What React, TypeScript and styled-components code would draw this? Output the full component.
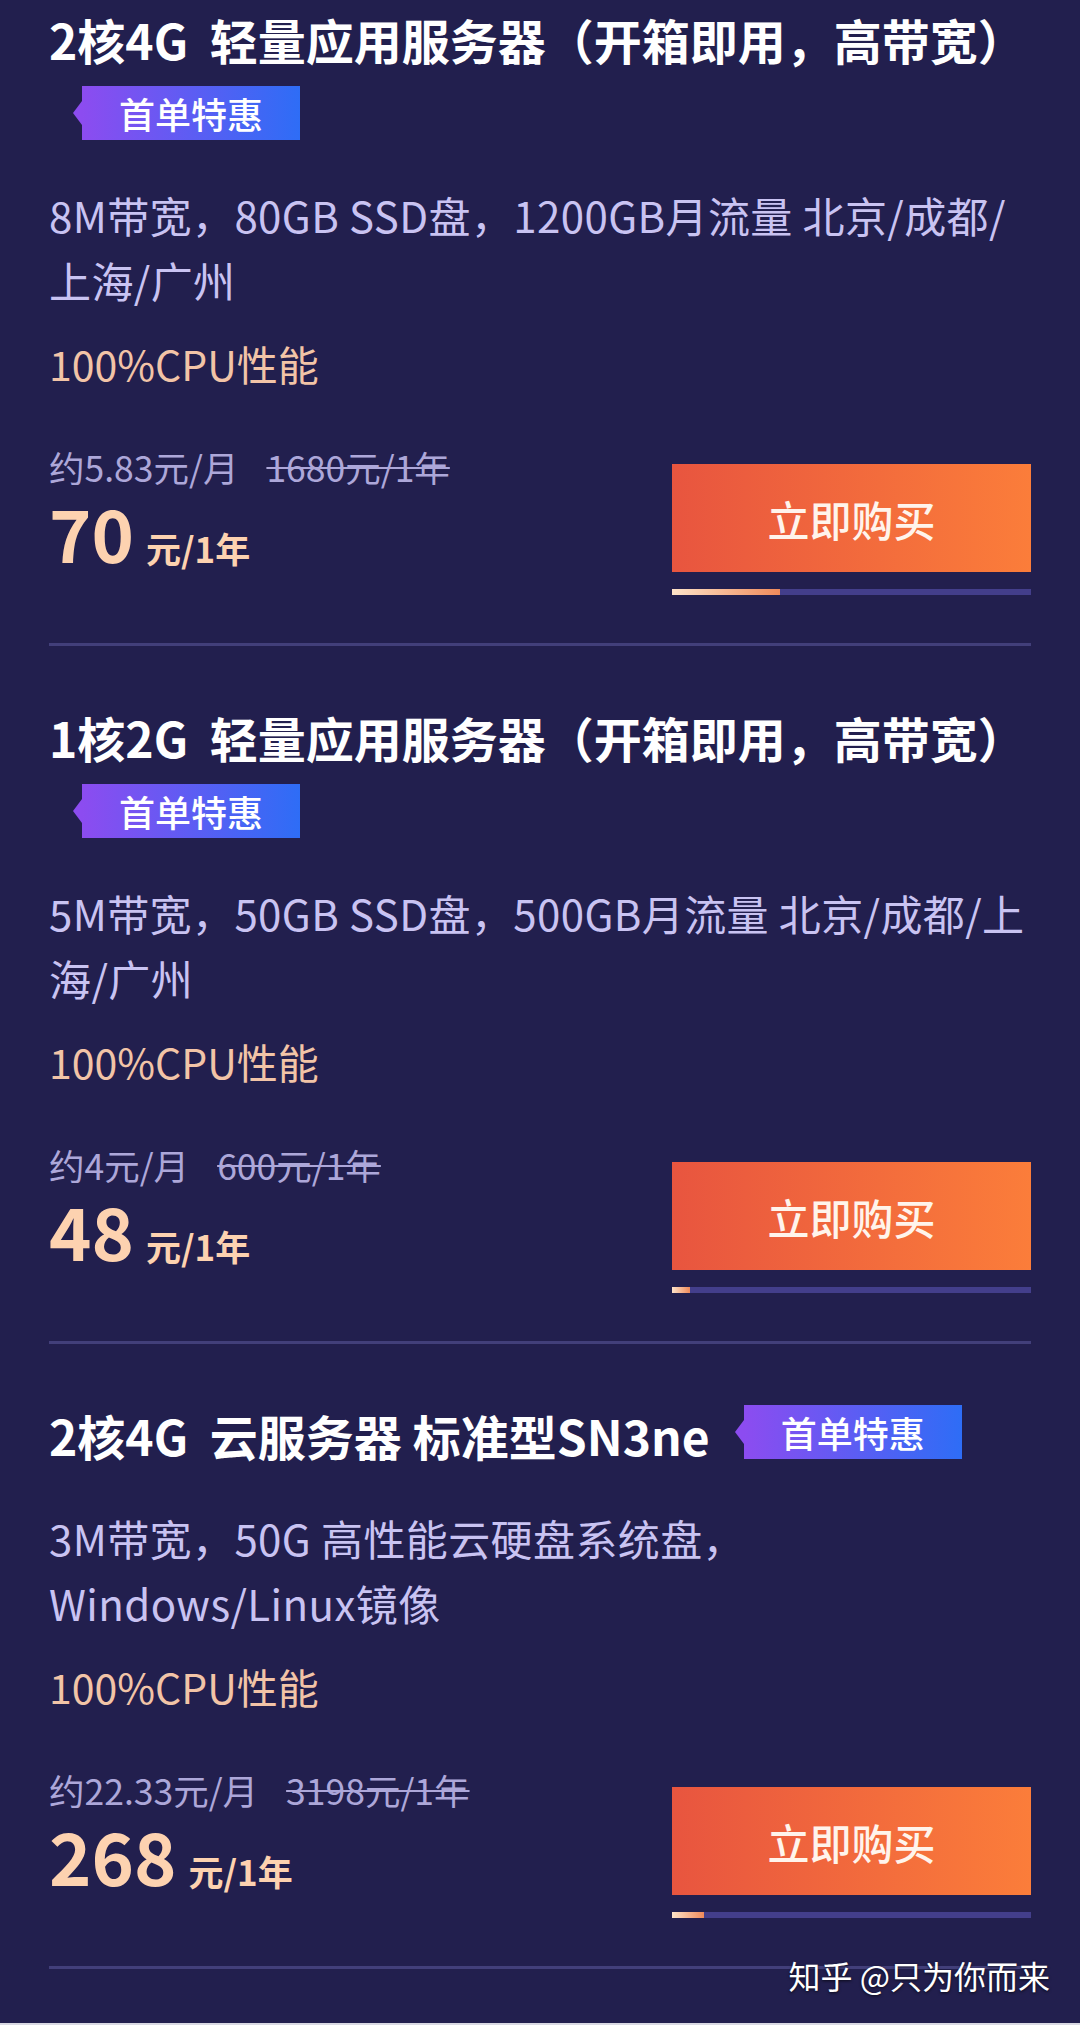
import styled, { createGlobalStyle } from 'styled-components';

interface IProduct {
  id: string;
  title: string;
  inlineTag: boolean;
  description: string;
  perMonth: string;
  original: string;
  price: string;
  progress: number;
}

const products: IProduct[] = [
  {
    id: 'lighthouse-2c4g',
    title: '2核4G\u00a0\u00a0轻量应用服务器（开箱即用，高带宽）',
    inlineTag: false,
    description: '8M带宽，80GB SSD盘，1200GB月流量 北京/成都/上海/广州',
    perMonth: '约5.83元/月',
    original: '1680元/1年',
    price: '70',
    progress: 30,
  },
  {
    id: 'lighthouse-1c2g',
    title: '1核2G\u00a0\u00a0轻量应用服务器（开箱即用，高带宽）',
    inlineTag: false,
    description: '5M带宽，50GB SSD盘，500GB月流量 北京/成都/上海/广州',
    perMonth: '约4元/月',
    original: '600元/1年',
    price: '48',
    progress: 5,
  },
  {
    id: 'cvm-2c4g',
    title: '2核4G\u00a0\u00a0云服务器 标准型SN3ne',
    inlineTag: true,
    description: '3M带宽，50G 高性能云硬盘系统盘，\nWindows/Linux镜像',
    perMonth: '约22.33元/月',
    original: '3198元/1年',
    price: '268',
    progress: 9,
  },
];

const GlobalStyle = createGlobalStyle`
  html, body {
    margin: 0;
    padding: 0;
    background: #221f4e;
  }

  body {
    font-family: 'Noto Sans CJK SC', 'Noto Sans', sans-serif;
    -webkit-font-smoothing: antialiased;
  }
`;

const Page = styled.div`
  position: relative;
  box-sizing: border-box;
  height: 2025px;
  overflow: hidden;
  padding: 0 49px;
  background: #221f4e;
  border-bottom: 2px solid #d9d9e3;
`;

const Section = styled.section<{ $cut?: boolean }>`
  display: flex;
  flex-direction: column;
  padding: ${({ $cut }) => ($cut ? '9px' : '61px')} 0 48px;
  border-bottom: 3px solid #423f7a;
`;

const TitleRow = styled.div`
  display: flex;
  align-items: flex-start;
`;

const Title = styled.h3`
  margin: 0;
  font-size: 48px;
  line-height: 60px;
  font-weight: 700;
  color: #ffffff;
  white-space: nowrap;
`;

const Tag = styled.span<{ $inline?: boolean }>`
  position: relative;
  display: inline-flex;
  align-items: center;
  justify-content: center;
  align-self: flex-start;
  width: 218px;
  height: 54px;
  margin: ${({ $inline }) => ($inline ? '0 0 0 34px' : '17px 0 0 33px')};
  background: linear-gradient(90deg, #8c4cf0, #2e6df6);
  color: #ffffff;
  font-size: 36px;
  font-weight: 500;
  line-height: 1;

  &::before {
    content: '';
    position: absolute;
    left: -9px;
    top: 50%;
    transform: translateY(-50%);
    border-top: 12px solid transparent;
    border-bottom: 12px solid transparent;
    border-right: 9px solid #8c4cf0;
  }
`;

const Description = styled.p<{ $compact?: boolean }>`
  margin: ${({ $compact }) => ($compact ? '40px' : '42px')} 0 0;
  font-size: 42px;
  letter-spacing: 0.4px;
  line-height: 65px;
  color: #c9c3f2;
  white-space: pre-line;
`;

const Performance = styled.p`
  margin: 19px 0 0;
  font-size: 41px;
  line-height: 65px;
  color: #f2c4a7;
`;

const PriceRow = styled.div`
  display: flex;
  justify-content: space-between;
  align-items: flex-start;
  margin-top: 51px;
`;

const PriceInfo = styled.div`
  display: flex;
  flex-direction: column;
`;

const Monthly = styled.div`
  font-size: 35.5px;
  line-height: 40px;
  color: #ada7d9;
  white-space: nowrap;

  > s {
    margin-left: 28px;
    text-decoration-thickness: 2px;
  }
`;

const Yearly = styled.div`
  display: flex;
  align-items: baseline;
  height: 90px;
  color: #fdd2b0;

  > strong {
    font-size: 72px;
    line-height: 90px;
    font-weight: 600;
  }

  > span {
    margin-left: 12px;
    font-size: 35px;
    font-weight: 700;
  }
`;

const BuyColumn = styled.div`
  display: flex;
  flex-direction: column;
  width: 359px;
  padding-top: 17px;
`;

const BuyButton = styled.button`
  height: 108px;
  border: none;
  padding: 0;
  background: linear-gradient(90deg, #e8553f, #fb7d3a);
  color: #fff4ec;
  font-family: inherit;
  font-size: 42px;
  font-weight: 500;
  cursor: pointer;
`;

const Progress = styled.div`
  height: 6px;
  margin-top: 17px;
  background: #433e8b;

  > div {
    height: 100%;
    background: linear-gradient(90deg, #fde3c9, #ef8a5b);
  }
`;

const Watermark = styled.div`
  position: absolute;
  right: 30px;
  bottom: 28px;
  font-size: 32px;
  line-height: 40px;
  color: #ffffff;
  text-shadow: 0 1px 3px rgba(0, 0, 0, 0.7);
`;

const ProductCard = ({ product, cut }: { product: IProduct; cut?: boolean }) => (
  <Section $cut={cut}>
    <TitleRow>
      <Title>{product.title}</Title>
      {product.inlineTag && <Tag $inline>首单特惠</Tag>}
    </TitleRow>
    {!product.inlineTag && <Tag>首单特惠</Tag>}

    <Description $compact={product.inlineTag}>{product.description}</Description>
    <Performance>100%CPU性能</Performance>

    <PriceRow>
      <PriceInfo>
        <Monthly>
          {product.perMonth}
          <s>{product.original}</s>
        </Monthly>
        <Yearly>
          <strong>{product.price}</strong>
          <span>元/1年</span>
        </Yearly>
      </PriceInfo>

      <BuyColumn>
        <BuyButton type="button">立即购买</BuyButton>
        <Progress>
          <div style={{ width: `${product.progress}%` }} />
        </Progress>
      </BuyColumn>
    </PriceRow>
  </Section>
);

export default function App() {
  return (
    <>
      <GlobalStyle />
      <Page>
        {products.map((product, index) => (
          <ProductCard key={product.id} product={product} cut={index === 0} />
        ))}
        <Watermark>知乎 @只为你而来</Watermark>
      </Page>
    </>
  );
}
